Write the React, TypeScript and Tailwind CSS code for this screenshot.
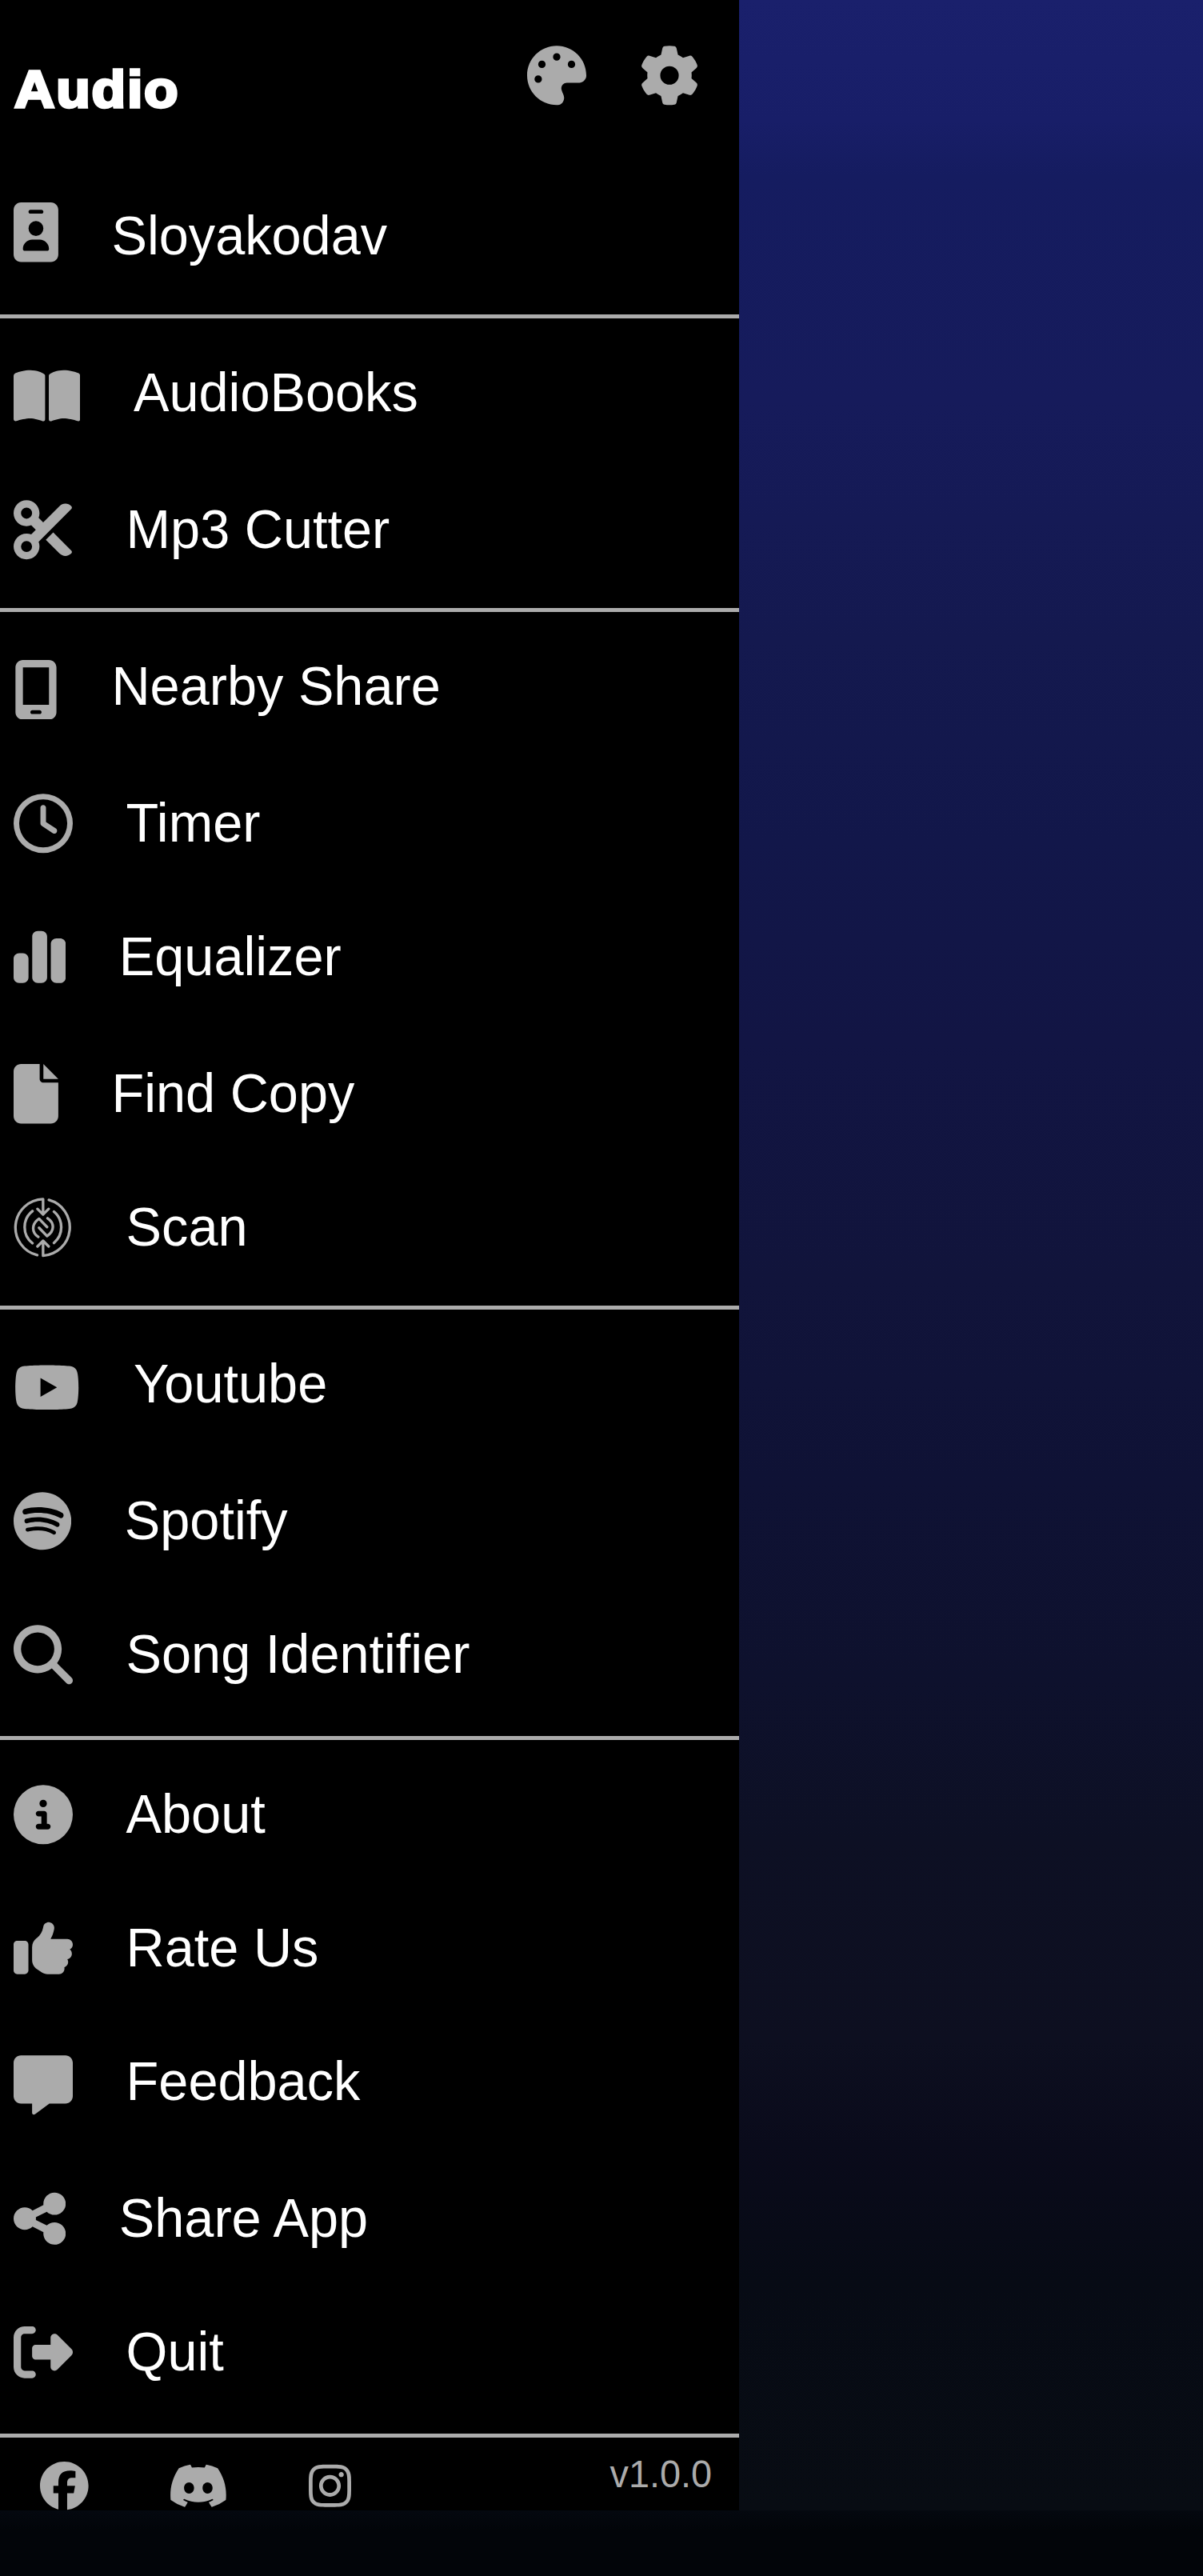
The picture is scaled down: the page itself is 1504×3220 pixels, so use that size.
import type { ReactNode } from "react";
import {
  FaPalette,
  FaGear,
  FaIdBadge,
  FaBookOpen,
  FaScissors,
  FaMobileScreen,
  FaRegClock,
  FaChartSimple,
  FaFile,
  FaYoutube,
  FaSpotify,
  FaMagnifyingGlass,
  FaCircleInfo,
  FaThumbsUp,
  FaMessage,
  FaShareNodes,
  FaRightFromBracket,
  FaFacebook,
  FaDiscord,
  FaInstagram,
} from "react-icons/fa6";

const square = "h-[74.5px] w-[74px] shrink-0";
const narrow = "h-[74.5px] w-[55.9px] shrink-0";
const medium = "h-[74.5px] w-[65.2px] shrink-0";
const wide = "h-[74.5px] w-[83.4px] shrink-0";

function ScanIcon() {
  return (
    <svg
      viewBox="50 50 223 223"
      className={square}
      fill="none"
      stroke="currentColor"
      strokeWidth="10"
      strokeLinecap="round"
      strokeLinejoin="round"
    >
      <path d="M139 266A107 107 0 0 1 161 55V112M140 92l21 21 21-21" />
      <path d="M183 58A107 107 0 0 1 161 268V212M140 233l21-21 21 21" />
      <path d="M121 100A77 77 0 0 0 121 221M202 102A77 77 0 0 1 202 220" />
      <path d="M143 197C117 180 117 148 146 129L176 160M178 127C205 145 205 175 176 194L146 163" />
    </svg>
  );
}

function Row({ children, label, className = "" }: { children: ReactNode; label: string; className?: string }) {
  return (
    <li className={`flex h-[76px] items-start gap-[66.6px] pl-[17px] ${className}`}>
      {children}
      <span className="origin-[0_60px] scale-y-[1.02] whitespace-nowrap text-[66.67px] leading-[75px] text-white">
        {label}
      </span>
    </li>
  );
}

function Divider() {
  return <hr className="h-[5px] w-full border-0 bg-[#ababab]" />;
}

export default function App() {
  return (
    <div className="h-[3220px] w-[1504px] overflow-hidden bg-[#020509] font-['Liberation_Sans',Arial,sans-serif]">
      <div className="flex h-[3138px] bg-[linear-gradient(180deg,#1a206c_0px,#181e68_150px,#151c60_220px,#161b5b_500px,#14194f_800px,#12174a_1050px,#121544_1300px,#11143b_1600px,#0f1235_1850px,#0e112d_2100px,#0d1024_2300px,#0d0f20_2550px,#0a0b1b_2680px,#070b15_2850px,#080c13_3138px)]">
        <aside className="flex w-[924px] flex-col bg-black text-[#ababab]">
          <header className="flex h-[182px] items-start justify-between pl-[18px] pr-[50px]">
            <h1 className="mt-[74px] origin-left scale-x-[1.08] text-[64.5px] font-bold leading-[76px] tracking-[1.7px] text-white [-webkit-text-stroke:3.4px_white]">
              Audio
            </h1>
            <div className="mt-[57px] flex gap-[66.6px]">
              <FaPalette className={square} />
              <FaGear className={square} />
            </div>
          </header>

          <ul className="pb-[59px] pt-[76px]">
            <Row label="Sloyakodav"><FaIdBadge className={`${narrow} -mt-[5px]`} /></Row>
          </ul>
          <Divider />

          <ul className="pb-[59px] pt-14">
            <Row label="AudioBooks"><FaBookOpen className={`${wide} mt-[4px]`} /></Row>
            <Row label="Mp3 Cutter" className="mt-[95px]"><FaScissors className={square} /></Row>
          </ul>
          <Divider />

          <ul className="pb-[59px] pt-14">
            <Row label="Nearby Share"><FaMobileScreen className={`${narrow} mt-[3.5px]`} /></Row>
            <Row label="Timer" className="mt-[95px]"><FaRegClock className={square} /></Row>
            <Row label="Equalizer" className="mt-[91px]"><FaChartSimple className={medium} /></Row>
            <Row label="Find Copy" className="mt-[95px]"><FaFile className={narrow} /></Row>
            <Row label="Scan" className="mt-[91px]"><ScanIcon /></Row>
          </ul>
          <Divider />

          <ul className="pb-[63px] pt-14">
            <Row label="Youtube"><FaYoutube className={`${wide} mt-[3.5px]`} /></Row>
            <Row label="Spotify" className="mt-[95px]">
              <FaSpotify className="h-[74.5px] w-[72.2px] shrink-0" />
            </Row>
            <Row label="Song Identifier" className="mt-[91px]"><FaMagnifyingGlass className={square} /></Row>
          </ul>
          <Divider />

          <ul className="pb-[63px] pt-14">
            <Row label="About"><FaCircleInfo className={square} /></Row>
            <Row label="Rate Us" className="mt-[91px]"><FaThumbsUp className={square} /></Row>
            <Row label="Feedback" className="mt-[91px]"><FaMessage className={`${square} mt-[4px]`} /></Row>
            <Row label="Share App" className="mt-[95px]"><FaShareNodes className={medium} /></Row>
            <Row label="Quit" className="mt-[91px]"><FaRightFromBracket className={square} /></Row>
          </ul>
          <Divider />

          <footer className="flex h-[91px] items-start justify-between pl-[50px] pr-[34px]">
            <div className="mt-[30px] flex gap-[99.8px]">
              <FaFacebook className="h-[60.6px] w-[60.6px] shrink-0" />
              <FaDiscord className="h-[60.6px] w-[75.8px] shrink-0" />
              <FaInstagram className="h-[60.6px] w-[53px] shrink-0" />
            </div>
            <span className="mt-[20px] origin-[0_43px] scale-y-[1.04] text-[46.8px] leading-[53px]">v1.0.0</span>
          </footer>
        </aside>
      </div>
      <div className="h-[82px] bg-[linear-gradient(180deg,#04080f,#020509_30%)]" />
    </div>
  );
}
